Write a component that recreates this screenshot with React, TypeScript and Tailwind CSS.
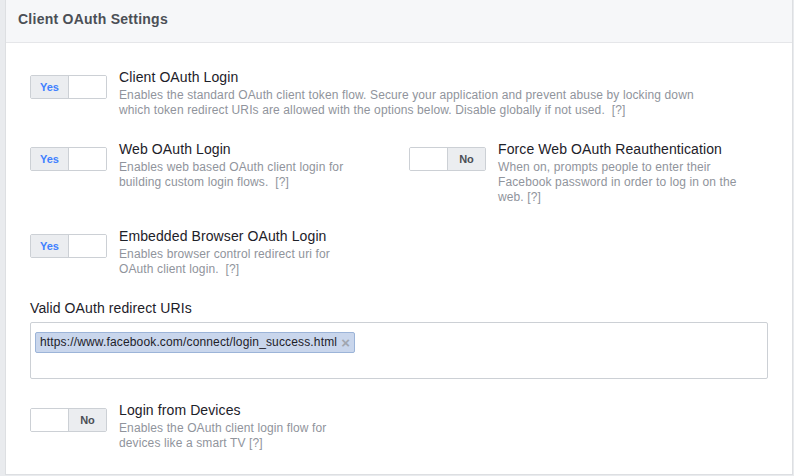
import React from 'react'

const font = { fontFamily: '"Liberation Sans", Arial, Helvetica, sans-serif' }

function Toggle({ on }: { on: boolean }) {
  return (
    <div className="mt-[7px] flex h-[24px] w-[77px] shrink-0 overflow-hidden rounded-[2px] border border-[#ccd0d5] text-[11px] font-bold">
      {on ? (
        <>
          <div className="flex w-[38px] items-center justify-center border-r border-[#ccd0d5] bg-[#ebedf0] text-[#4080ff]">Yes</div>
          <div className="flex-1 bg-white" />
        </>
      ) : (
        <>
          <div className="flex-1 bg-white" />
          <div className="flex w-[38px] items-center justify-center border-l border-[#ccd0d5] bg-[#ebedf0] text-[#4b4f56]">No</div>
        </>
      )}
    </div>
  )
}

function Setting({
  on,
  title,
  desc,
  width,
}: {
  on: boolean
  title: string
  desc: string
  width: string
}) {
  return (
    <div className="flex items-start gap-[12px]">
      <Toggle on={on} />
      <div>
        <div className="text-[14px] leading-[18px] tracking-[0.1px] text-[#1d2129]">{title}</div>
        <p className={`mt-[2px] text-[12px] leading-[15px] tracking-[0.12px] text-[#90949c] ${width}`}>{desc}</p>
      </div>
    </div>
  )
}

export default function App() {
  return (
    <div className="min-h-screen bg-[#e9ebee]" style={font}>
      <div className="ml-[5px] w-[788px] border-x border-b border-[#dddfe2] bg-white">
        {/* header */}
        <div className="h-[43px] border-b border-[#e5e6e9] bg-[#f6f7f9] px-3 pt-[10px]">
          <h2 className="text-[14px] font-bold leading-[18px] tracking-[0.25px] text-[#4b4f56]">Client OAuth Settings</h2>
        </div>

        <div className="flex flex-col gap-[22px] px-6 pt-[25px] pb-[23px]">
          <Setting
            on
            title="Client OAuth Login"
            width="w-[585px]"
            desc={'Enables the standard OAuth client token flow. Secure your application and prevent abuse by locking down which token redirect URIs are allowed with the options below. Disable globally if not used.\u00a0 [?]'}
          />

          <div className="grid grid-cols-[379px_1fr]">
            <Setting
              on
              title="Web OAuth Login"
              width="w-[240px]"
              desc={'Enables web based OAuth client login for building custom login flows.\u00a0 [?]'}
            />
            <Setting
              on={false}
              title="Force Web OAuth Reauthentication"
              width="w-[245px]"
              desc="When on, prompts people to enter their Facebook password in order to log in on the web. [?]"
            />
          </div>

          <Setting
            on
            title="Embedded Browser OAuth Login"
            width="w-[240px]"
            desc={'Enables browser control redirect uri for OAuth client login.\u00a0 [?]'}
          />

          <div>
            <div className="mb-[5px] text-[14px] leading-[18px] tracking-[0.1px] text-[#1d2129]">Valid OAuth redirect URIs</div>
            <div className="h-[57px] rounded-[2px] border border-[#ccd0d5] bg-white px-[4px] pt-[6px]">
              <span className="inline-flex h-[21px] items-center gap-[4px] rounded-[2px] border border-[#9cb4d8] bg-[#c9d6ec] pr-[4px] pl-[4px] text-[12px] tracking-[0.15px] text-[#1d2129]">
                https://www.facebook.com/connect/login_success.html
                <span className="text-[15px] font-bold leading-none text-[#a0a6b0]">×</span>
              </span>
            </div>
          </div>

          <Setting
            on={false}
            title="Login from Devices"
            width="w-[240px]"
            desc="Enables the OAuth client login flow for devices like a smart TV [?]"
          />
        </div>
      </div>
    </div>
  )
}
